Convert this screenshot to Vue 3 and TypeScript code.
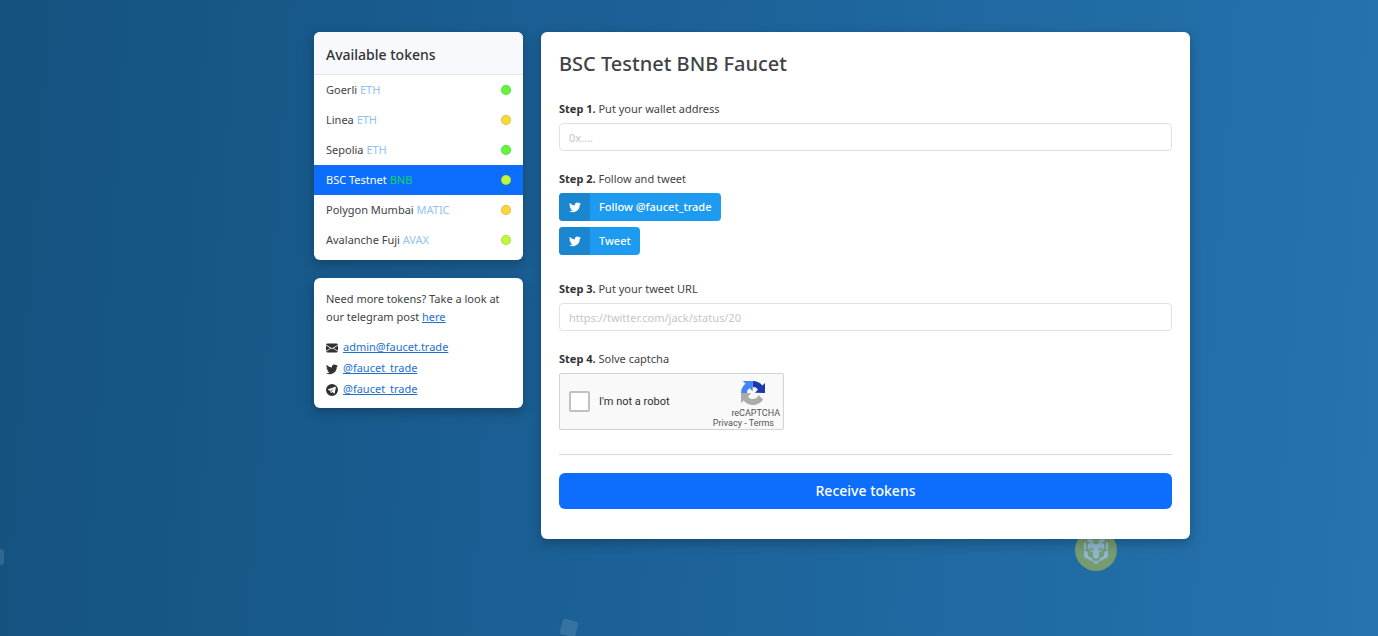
<script setup lang="ts">
import { ref } from 'vue'

interface Token {
  network: string
  symbol: string
  color: string
}

const tokens: Token[] = [
  { network: 'Goerli', symbol: 'ETH', color: '#62f63c' },
  { network: 'Linea', symbol: 'ETH', color: '#f8da36' },
  { network: 'Sepolia', symbol: 'ETH', color: '#62f63c' },
  { network: 'BSC Testnet', symbol: 'BNB', color: '#c0f83c' },
  { network: 'Polygon Mumbai', symbol: 'MATIC', color: '#fbd63c' },
  { network: 'Avalanche Fuji', symbol: 'AVAX', color: '#c0f83c' },
]

const selected = ref(3)
const wallet = ref('')
const tweetUrl = ref('')
const human = ref(false)

const bird =
  'M5 15c6 0 9.300-5 9.300-9.300v-.4A6.700 6.700 0 0 0 16 3.500a6.500 6.500 0 0 1-1.900.5A3.300 3.300 0 0 0 15.600 2.200a6.600 6.600 0 0 1-2.100.8 3.300 3.300 0 0 0-5.600 3A9.300 9.300 0 0 1 1.100 2.600a3.300 3.300 0 0 0 1 4.400A3.300 3.300 0 0 1 .6 6.600a3.300 3.300 0 0 0 2.600 3.200 3.200 3.200 0 0 1-1.500.1 3.300 3.300 0 0 0 3.100 2.300A6.600 6.600 0 0 1 0 13.500 9.300 9.300 0 0 0 5 15'
</script>

<template>
  <div class="page">
    <span class="shape shape-left"></span>
    <span class="shape shape-bottom"></span>
    <svg class="coin" viewBox="0 0 42 42" aria-hidden="true">
      <circle cx="21" cy="21" r="21" fill="#779b70" />
      <g fill="#8eb6d3">
        <path d="M21 6l4 2.500-4 2.500-4-2.500zM15 9.500l4 2.500-3 2-4-2zM27 9.500l-4 2.500 3 2 4-2z" />
        <path d="M13 15l4-1.500 4 2 4-2 4 1.500.5 4-3.500 3.500-2 1v4.500l-3 2-3-2v-4.500l-2-1-3.500-3.500z" />
        <path d="M9 14l2-1v7l-2 1zM33 14l-2-1v7l2 1z" />
        <path d="M9 22.500l2-1 2 2.500v3l4.500 2.500v3L9 28zM33 22.500l-2-1-2 2.500v3L24.500 29.500v3L33 28z" />
        <path d="M18.500 31l2.500 1.500 2.500-1.500v2.500L21 35l-2.500-1.500z" />
      </g>
      <path d="M14.500 18l4 2-.5 2-2.500-1zM27.500 18l-4 2 .5 2 2.500-1z" fill="#779b70" />
    </svg>

    <div class="layout">
      <aside class="sidebar">
        <nav class="card tokens">
          <h2>Available tokens</h2>
          <button
            v-for="(token, i) in tokens"
            :key="token.network"
            type="button"
            class="token"
            :class="{ active: i === selected }"
            @click="selected = i"
          >
            <span>{{ token.network }} <span class="symbol">{{ token.symbol }}</span></span>
            <span class="dot" :style="{ background: token.color }"></span>
          </button>
        </nav>

        <section class="card contact">
          <p>Need more tokens? Take a look at our telegram post <a href="#">here</a></p>
          <ul>
            <li>
              <svg viewBox="0 0 16 16" aria-hidden="true">
                <path d="M.1 3.600A2 2 0 0 1 2 2h12a2 2 0 0 1 1.900 1.600L8 8.400zM0 4.700v7.100l5.800-3.500zM6.800 8.800L.2 12.800A2 2 0 0 0 2 14h12a2 2 0 0 0 1.800-1.200l-6.600-4L8 9.600zM10.200 8.200L16 11.800V4.700z" />
              </svg>
              <a href="#">admin@faucet.trade</a>
            </li>
            <li>
              <svg viewBox="0 0 16 16" aria-hidden="true"><path :d="bird" /></svg>
              <a href="#">@faucet_trade</a>
            </li>
            <li>
              <svg viewBox="0 0 16 16" aria-hidden="true">
                <path fill-rule="evenodd" d="M16 8A8 8 0 1 1 0 8a8 8 0 0 1 16 0M3 7.900l2.600 1 1 3.300 1.700-1.500 2.500 1.800c.4.200.7.100.8-.4l1.500-7.600c.1-.6-.2-.9-.7-.7L3 7.100c-.5.300-.5.600 0 .8m3.300 1l4.200-2.800-3.400 3.400-.2 1.500z" />
              </svg>
              <a href="#">@faucet_trade</a>
            </li>
          </ul>
        </section>
      </aside>

      <main class="card faucet">
        <h1>BSC Testnet BNB Faucet</h1>
        <form @submit.prevent>
          <div class="step">
            <label for="wallet"><strong>Step 1.</strong> Put your wallet address</label>
            <input id="wallet" v-model="wallet" class="field" type="text" placeholder="0x...." />
          </div>
          <div class="step step-social">
            <p><strong>Step 2.</strong> Follow and tweet</p>
            <a class="social" href="#">
              <span class="social-icon"><svg viewBox="0 0 16 16" aria-hidden="true"><path :d="bird" /></svg></span>
              <span class="social-text">Follow @faucet_trade</span>
            </a>
            <a class="social" href="#">
              <span class="social-icon"><svg viewBox="0 0 16 16" aria-hidden="true"><path :d="bird" /></svg></span>
              <span class="social-text">Tweet</span>
            </a>
          </div>
          <div class="step">
            <label for="tweet"><strong>Step 3.</strong> Put your tweet URL</label>
            <input id="tweet" v-model="tweetUrl" class="field" type="text" placeholder="https://twitter.com/jack/status/20" />
          </div>
          <div class="step step-captcha">
            <p><strong>Step 4.</strong> Solve captcha</p>
            <div class="captcha">
              <label class="robot">
                <input v-model="human" type="checkbox" />
                <span>I'm not a robot</span>
              </label>
              <div class="brand">
                <svg viewBox="0 0 64 64" aria-hidden="true">
                  <path fill="#1c3aa9" d="M64 32V5l-7 7A32 32 0 0 0 32 0v16c6 0 10 2 13 7l-8 8z" />
                  <path fill="#4285f4" d="M32 0H5l7 7A32 32 0 0 0 0 32h16c0-6 2-10 7-13l8 8z" />
                  <path fill="#ababab" d="M0 32v27l7-7a32 32 0 0 0 52-3L47 38c-4 8-11 11-18 10-5-1-8-3-10-7l8-9z" />
                </svg>
                <span>reCAPTCHA</span>
                <small><a href="#">Privacy</a> - <a href="#">Terms</a></small>
              </div>
            </div>
          </div>
          <hr />
          <button class="submit" type="submit">Receive tokens</button>
        </form>
      </main>
    </div>
  </div>
</template>

<style>
body {
  margin: 0;
}
</style>

<style scoped>
* {
  box-sizing: border-box;
}

.page {
  position: relative;
  min-height: 100vh;
  overflow: hidden;
  padding: 32px 188px 97px 314px;
  background: linear-gradient(94deg, #14527f 0%, #1c6299 50%, #2673ae 100%);
  color: #404346;
  font: 11px/18px "Noto Sans", "Open Sans", sans-serif;
}

button,
input {
  font: inherit;
}

h1,
h2,
p,
ul {
  margin: 0;
  padding: 0;
}

a {
  color: #1d6fd0;
}

strong {
  font-weight: 700;
  color: #303336;
}

.shape {
  position: absolute;
  width: 16px;
  height: 16px;
  border-radius: 3px;
  background: rgba(255, 255, 255, 0.12);
}

.shape-left {
  left: -12px;
  top: 549px;
}

.shape-bottom {
  left: 561px;
  top: 620px;
  transform: rotate(15deg);
}

.coin {
  position: absolute;
  left: 1075px;
  top: 529px;
  width: 42px;
  height: 42px;
}

.layout {
  position: relative;
  display: grid;
  grid-template-columns: 209px minmax(0, 1fr);
  align-items: start;
  gap: 18px;
}

.sidebar {
  display: grid;
  gap: 18px;
}

.card {
  border-radius: 6px;
  background: #fff;
  box-shadow: 0 4px 12px rgba(0, 0, 0, 0.25);
}

.tokens {
  overflow: hidden;
  padding-bottom: 5px;
}

.tokens h2 {
  padding: 13px 12px 9px;
  border-bottom: 1px solid #e4e6e9;
  background: #f8f9fc;
  color: #303336;
  font-size: 14px;
  font-weight: 500;
  line-height: 20px;
}

.token {
  display: flex;
  align-items: center;
  justify-content: space-between;
  width: 100%;
  height: 30px;
  padding: 0 12px;
  border: 0;
  background: none;
  color: #404346;
  text-align: left;
  cursor: pointer;
}

.symbol {
  color: #8fc3f5;
}

.token.active {
  background: #0d6efd;
  color: #fff;
}

.active .symbol {
  color: #0cd664;
}

.dot {
  width: 10px;
  height: 10px;
  border: 1px solid rgba(0, 0, 0, 0.1);
  border-radius: 50%;
}

.contact {
  padding: 12px 12px 9px;
}

.contact ul {
  margin-top: 10px;
  list-style: none;
}

.contact li {
  display: flex;
  align-items: center;
  gap: 5px;
  line-height: 21px;
}

.contact svg {
  width: 12px;
  height: 12px;
  margin-top: 2px;
  fill: #303336;
}

.faucet {
  padding: 18px 18px 30px;
}

h1 {
  margin-bottom: 22px;
  font-size: 20px;
  font-weight: 500;
  line-height: 28px;
}

.step {
  display: flex;
  flex-direction: column;
  align-items: flex-start;
  gap: 5px;
  margin-bottom: 19px;
}

.step-social {
  margin-bottom: 25px;
}

.field {
  width: 100%;
  height: 28px;
  padding: 0 9px;
  border: 1px solid #dee2e6;
  border-radius: 4px;
  background: #fff;
  color: #404346;
}

.field::placeholder {
  color: #c3c6c9;
  opacity: 1;
}

.social {
  display: flex;
  overflow: hidden;
  height: 28px;
  border-radius: 4px;
  background: #1d9bf0;
  color: #fff;
  font-weight: 500;
  line-height: 28px;
  text-decoration: none;
}

.social + .social {
  margin-top: 1px;
}

.social-icon {
  display: flex;
  align-items: center;
  justify-content: center;
  width: 31px;
  background: #1a86d0;
}

.social-icon svg {
  width: 12px;
  height: 12px;
  fill: #fff;
}

.social-text {
  padding: 0 9px;
}

.step-captcha {
  margin-bottom: 24px;
}

.captcha {
  display: flex;
  justify-content: space-between;
  width: 225px;
  height: 57px;
  padding: 0 3px 0 9px;
  border: 1px solid #d3d3d3;
  border-radius: 2px;
  background: #f9f9f9;
  color: #303030;
  font-family: Roboto, sans-serif;
}

.robot {
  display: flex;
  align-items: center;
  gap: 9px;
}

.robot input {
  appearance: none;
  width: 21px;
  height: 21px;
  margin: 0;
  border: 2px solid #c1c1c1;
  border-radius: 2px;
  background: #fff;
}

.robot input:checked {
  background: #4285f4;
}

.brand {
  display: flex;
  flex-direction: column;
  align-items: flex-end;
  padding-top: 7px;
  color: #555;
  font-size: 9px;
  line-height: 10px;
}

.brand svg {
  width: 24px;
  height: 24px;
  margin: 0 15px 3px 0;
}

.brand small {
  padding-right: 6px;
  font-size: 9px;
}

.brand a {
  color: inherit;
  text-decoration: none;
}

hr {
  margin: 0 0 18px;
  border: 0;
  border-top: 1px solid #d5d7da;
}

.submit {
  width: 100%;
  height: 36px;
  border: 0;
  border-radius: 6px;
  background: #0d6efd;
  color: #fff;
  font-size: 14px;
  font-weight: 500;
  cursor: pointer;
}
</style>
